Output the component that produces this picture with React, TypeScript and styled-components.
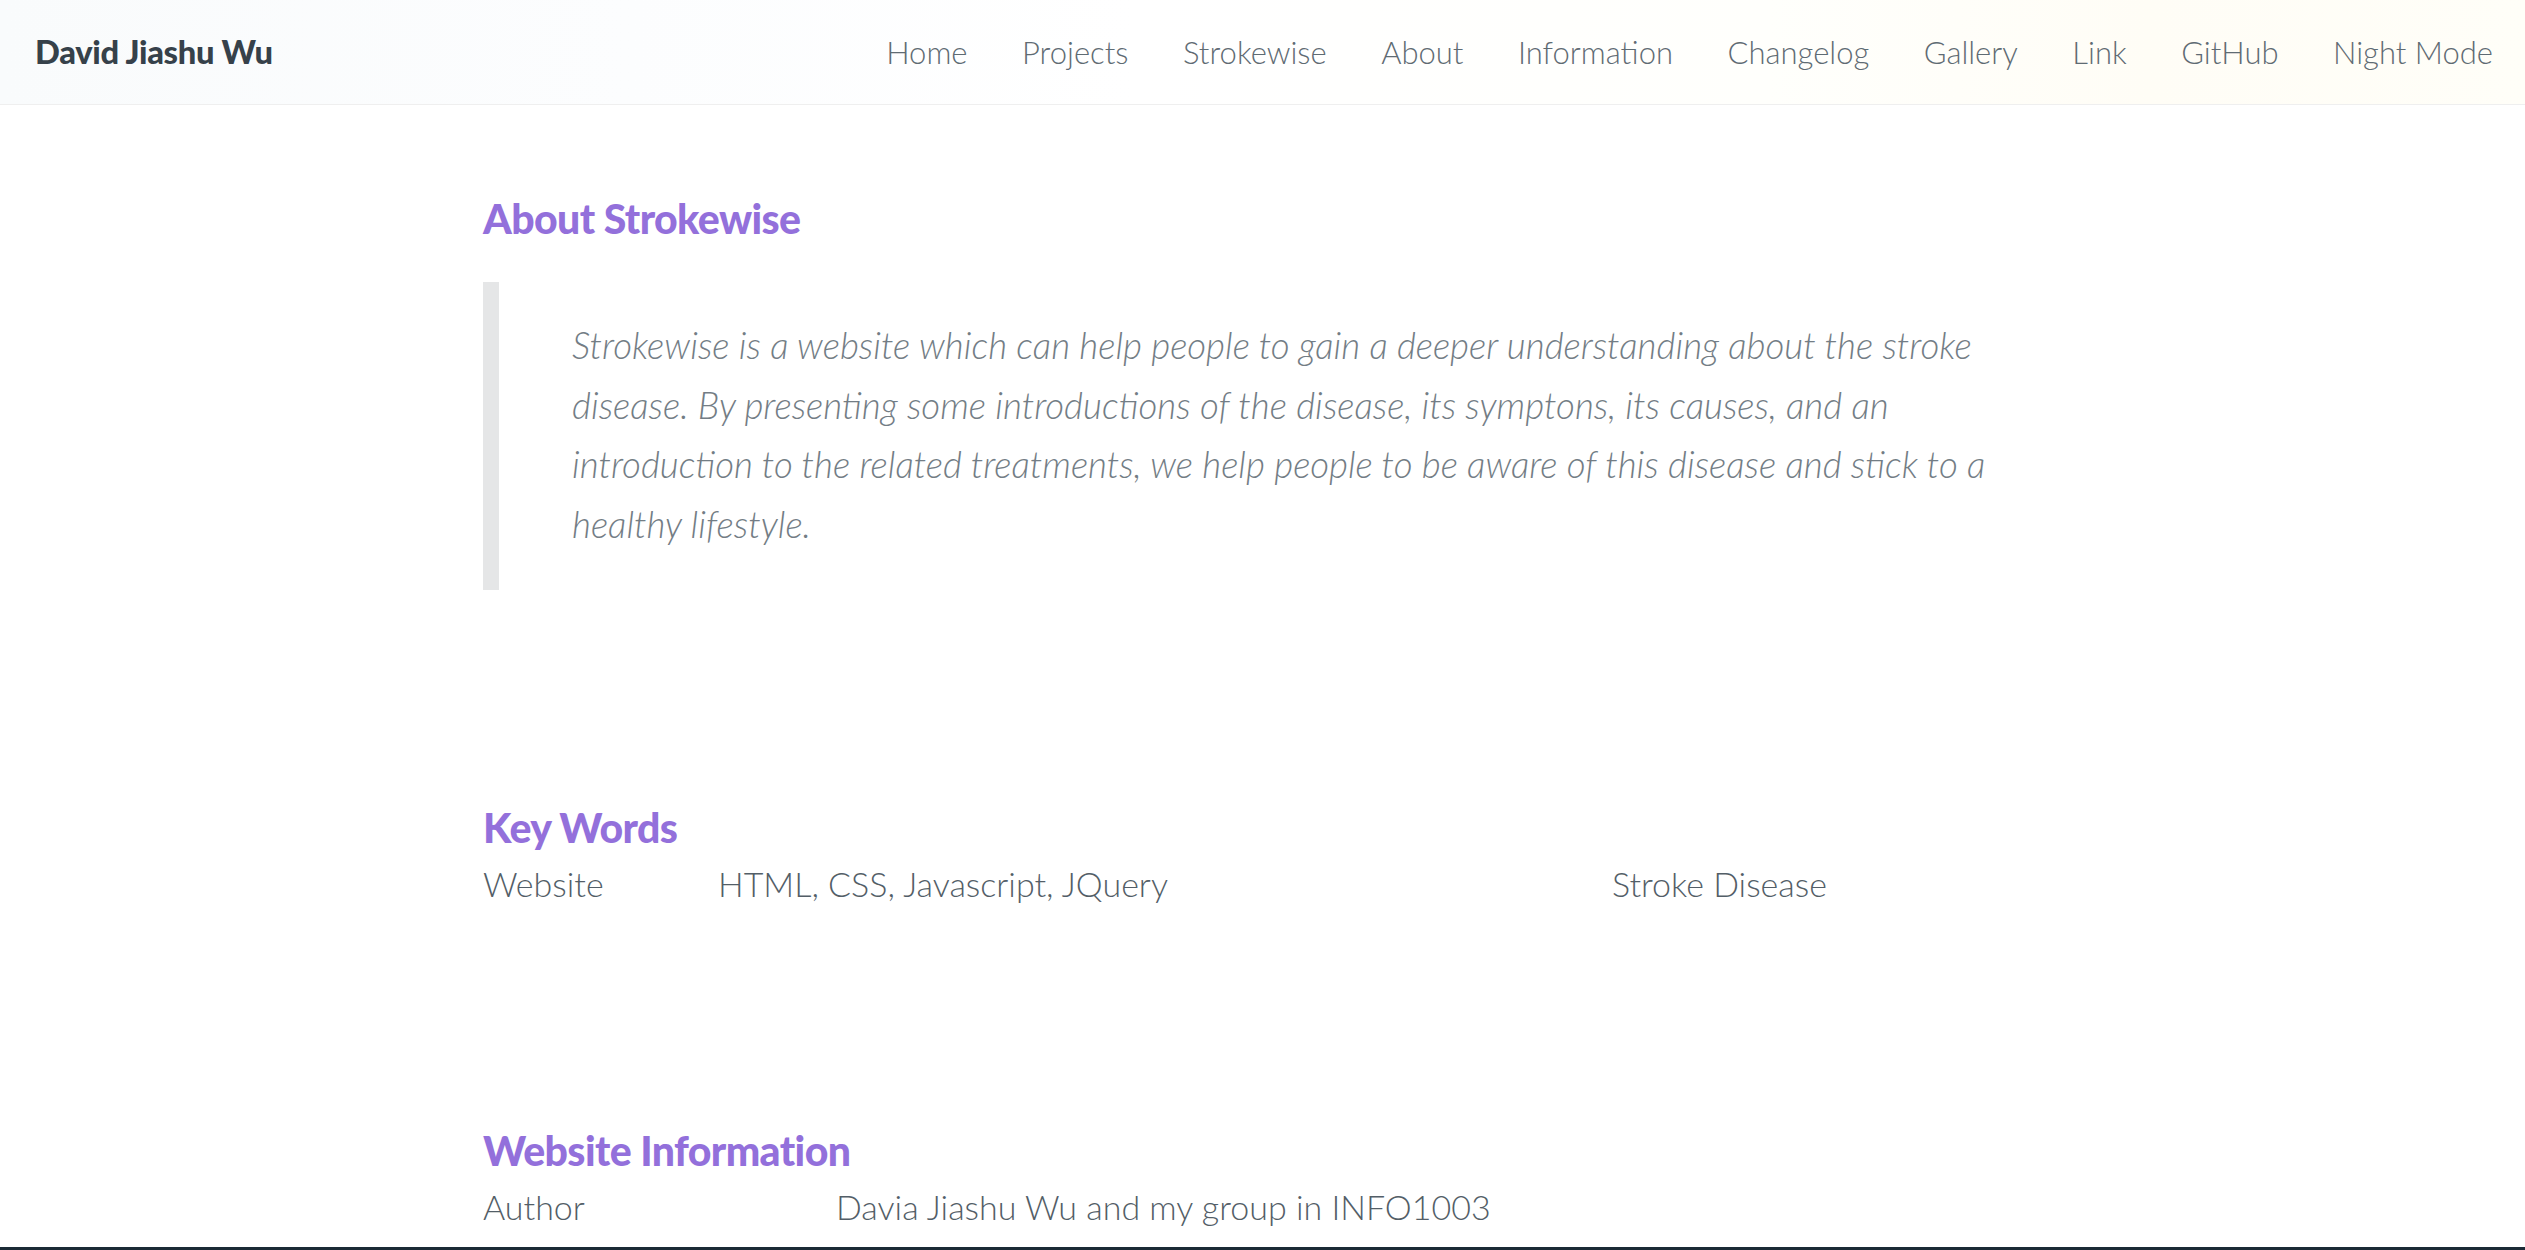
import React from "react";
import styled, { createGlobalStyle } from "styled-components";

const GlobalStyle = createGlobalStyle`
  html, body {
    margin: 0;
    padding: 0;
    background: #ffffff;
  }
  body {
    font-family: "Lato", "Noto Sans", sans-serif;
    font-weight: 300;
    color: #4f5a62;
  }
  * { box-sizing: border-box; }
`;

const Page = styled.div`
  display: flex;
  flex-direction: column;
  min-height: 100vh;
`;

const Header = styled.header`
  height: 105px;
  display: flex;
  align-items: center;
  justify-content: space-between;
  padding: 0 32px 0 35px;
  border-bottom: 1px solid #efefef;
  background: linear-gradient(
    90deg,
    #f9fbfc 0%,
    #fcfdfe 25%,
    #ffffff 45%,
    #fffffc 70%,
    #fffdf6 85%,
    #fffef8 100%
  );
`;

const Brand = styled.a`
  font-family: "Lato", sans-serif;
  font-weight: 900;
  font-size: 32.7px;
  letter-spacing: -0.3px;
  color: #36414a;
  text-decoration: none;
  line-height: 1;
`;

const Nav = styled.nav`
  display: flex;
  align-items: center;
  gap: 54.5px;
`;

const NavLink = styled.a`
  font-family: "Lato", sans-serif;
  font-weight: 300;
  font-size: 31px;
  color: #5f6b73;
  text-decoration: none;
  line-height: 1;
  white-space: nowrap;
`;

const Main = styled.main`
  width: 1559px;
  margin: 0 auto;
  padding-top: 91px;
  display: flex;
  flex-direction: column;
`;

const Section = styled.section<{ $gapTop: number }>`
  margin-top: ${(p) => p.$gapTop}px;
  display: flex;
  flex-direction: column;
`;

const Heading = styled.h2`
  margin: 0;
  font-family: "Lato", sans-serif;
  font-weight: 900;
  font-size: 41px;
  line-height: 45px;
  letter-spacing: -0.6px;
  color: #9370db;
`;

const Quote = styled.blockquote`
  margin: 41px 0 0;
  border-left: 16px solid #e5e6e7;
  padding: 34px 40px 36px 73px;
`;

const QuoteText = styled.p`
  margin: 0;
  font-family: "Lato", sans-serif;
  font-style: italic;
  font-weight: 300;
  font-size: 36.7px;
  line-height: 59.6px;
  color: #737d85;
`;

const InfoRow = styled.div<{ $cols: string }>`
  margin-top: 10px;
  display: grid;
  grid-template-columns: ${(p) => p.$cols};
  font-size: 34px;
  line-height: 48px;
  color: #535e67;
`;

const Cell = styled.span`
  white-space: nowrap;
`;

const Footer = styled.footer`
  margin-top: 16px;
  flex: 1;
  min-height: 200px;
  background: #1b2a35;
`;

const navItems = [
  "Home",
  "Projects",
  "Strokewise",
  "About",
  "Information",
  "Changelog",
  "Gallery",
  "Link",
  "GitHub",
  "Night Mode",
];

export default function App() {
  return (
    <Page>
      <GlobalStyle />
      <Header>
        <Brand href="#">David Jiashu Wu</Brand>
        <Nav>
          {navItems.map((n) => (
            <NavLink key={n} href="#">
              {n}
            </NavLink>
          ))}
        </Nav>
      </Header>
      <Main>
        <Section $gapTop={0}>
          <Heading>About Strokewise</Heading>
          <Quote>
            <QuoteText>
              Strokewise is a website which can help people to gain a deeper
              understanding about the stroke disease. By presenting some
              introductions of the disease, its symptons, its causes, and an
              introduction to the related treatments, we help people to be aware
              of this disease and stick to a healthy lifestyle.
            </QuoteText>
          </Quote>
        </Section>
        <Section $gapTop={215}>
          <Heading>Key Words</Heading>
          <InfoRow $cols="235px 894px 1fr">
            <Cell>Website</Cell>
            <Cell>HTML, CSS, Javascript, JQuery</Cell>
            <Cell>Stroke Disease</Cell>
          </InfoRow>
        </Section>
        <Section $gapTop={220}>
          <Heading>Website Information</Heading>
          <InfoRow $cols="353px 1fr">
            <Cell>Author</Cell>
            <Cell>Davia Jiashu Wu and my group in INFO1003</Cell>
          </InfoRow>
        </Section>
      </Main>
      <Footer />
    </Page>
  );
}
